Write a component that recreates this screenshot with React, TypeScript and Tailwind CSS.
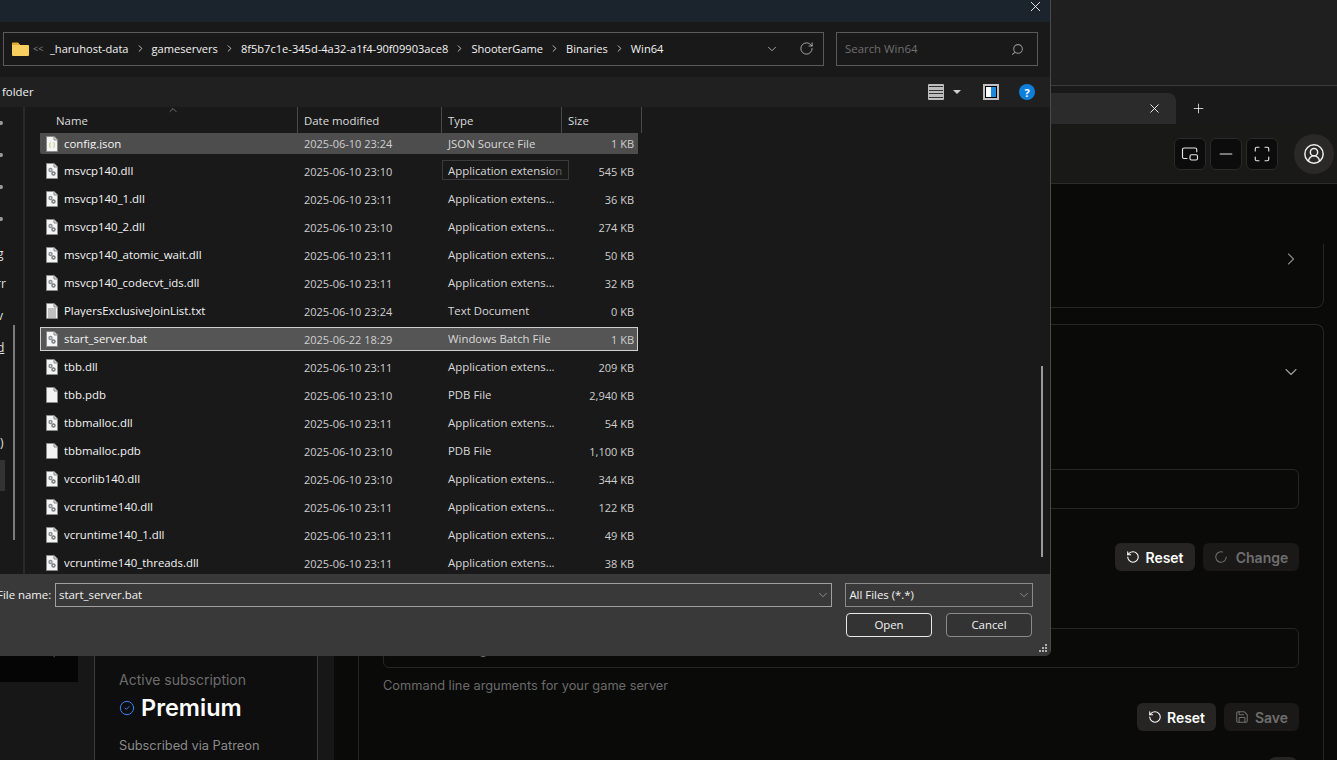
import {
  ChevronDown,
  ChevronRight,
  ChevronUp,
  CircleCheck,
  CircleUserRound,
  LoaderCircle,
  Maximize,
  Minus,
  PictureInPicture2,
  Plus,
  RotateCcw,
  RotateCw,
  Save,
  Search,
  X,
} from "lucide-react";

type Kind = "dll" | "json" | "txt" | "pdb";

const files: { name: string; date: string; type: string; size: string; kind: Kind }[] = [
  { name: "config.json", date: "2025-06-10 23:24", type: "JSON Source File", size: "1 KB", kind: "json" },
  { name: "msvcp140.dll", date: "2025-06-10 23:10", type: "Application extension", size: "545 KB", kind: "dll" },
  { name: "msvcp140_1.dll", date: "2025-06-10 23:11", type: "Application extens...", size: "36 KB", kind: "dll" },
  { name: "msvcp140_2.dll", date: "2025-06-10 23:10", type: "Application extens...", size: "274 KB", kind: "dll" },
  { name: "msvcp140_atomic_wait.dll", date: "2025-06-10 23:11", type: "Application extens...", size: "50 KB", kind: "dll" },
  { name: "msvcp140_codecvt_ids.dll", date: "2025-06-10 23:11", type: "Application extens...", size: "32 KB", kind: "dll" },
  { name: "PlayersExclusiveJoinList.txt", date: "2025-06-10 23:24", type: "Text Document", size: "0 KB", kind: "txt" },
  { name: "start_server.bat", date: "2025-06-22 18:29", type: "Windows Batch File", size: "1 KB", kind: "dll" },
  { name: "tbb.dll", date: "2025-06-10 23:11", type: "Application extens...", size: "209 KB", kind: "dll" },
  { name: "tbb.pdb", date: "2025-06-10 23:10", type: "PDB File", size: "2,940 KB", kind: "pdb" },
  { name: "tbbmalloc.dll", date: "2025-06-10 23:11", type: "Application extens...", size: "54 KB", kind: "dll" },
  { name: "tbbmalloc.pdb", date: "2025-06-10 23:10", type: "PDB File", size: "1,100 KB", kind: "pdb" },
  { name: "vccorlib140.dll", date: "2025-06-10 23:10", type: "Application extens...", size: "344 KB", kind: "dll" },
  { name: "vcruntime140.dll", date: "2025-06-10 23:11", type: "Application extens...", size: "122 KB", kind: "dll" },
  { name: "vcruntime140_1.dll", date: "2025-06-10 23:11", type: "Application extens...", size: "49 KB", kind: "dll" },
  { name: "vcruntime140_threads.dll", date: "2025-06-10 23:11", type: "Application extens...", size: "38 KB", kind: "dll" },
];

const crumbs = ["_haruhost-data", "gameservers", "8f5b7c1e-345d-4a32-a1f4-90f09903ace8", "ShooterGame", "Binaries", "Win64"];

const FileIcon = ({ kind }: { kind: Kind }) => (
  <svg width="12" height="16" viewBox="0 0 12 16" className="shrink-0">
    <path d="M.5.5h7.5l3.5 3.5v11.5H.5z" fill="#f4f4f4" stroke="#8b8b8b" />
    <path d="M8 .5V4h3.5" fill="#d8d8d8" stroke="#8b8b8b" />
    {kind === "dll" && (
      <g fill="#8a8f96">
        <circle cx="4.5" cy="7" r="2.2" />
        <circle cx="7.5" cy="10.5" r="2.2" fill="#767b82" />
        <circle cx="4.5" cy="7" r=".8" fill="#f4f4f4" />
        <circle cx="7.5" cy="10.5" r=".8" fill="#f4f4f4" />
      </g>
    )}
    {kind === "json" && (
      <path d="M4.5 6.5c-1 0-.5 2-1 2.5.5.5 0 2.5 1 2.5M7.5 6.5c1 0 .5 2 1 2.5-.5.5 0 2.5-1 2.5" fill="none" stroke="#a8b84a" strokeWidth=".8" />
    )}
    {kind === "txt" && <path d="M2 6h8M2 8h8M2 10h8M2 12h8M2 14h8" stroke="#8b8b8b" />}
  </svg>
);

const Footer = () => (
  <div className="relative flex h-[82px] flex-col bg-[#393939] pr-[17px]">
    <div className="mt-[9px] flex h-[24px] items-center">
      <span className="ml-[-3px] w-[58px] shrink-0 whitespace-nowrap">File name:</span>
      <div className="flex h-[24px] w-[779px] items-center border border-[#a0a0a0] pl-[3px]">
        <span className="flex-1">start_server.bat</span>
        <ChevronDown size={14} strokeWidth={1} className="mr-[1px] text-[#c4c4c4]" />
      </div>
      <div className="ml-[13px] flex h-[24px] w-[188px] items-center border border-[#8a8a8a] pl-[3px]">
        <span className="flex-1">All Files (*.*)</span>
        <ChevronDown size={14} strokeWidth={1} className="mr-[1px] text-[#c4c4c4]" />
      </div>
    </div>
    <div className="mt-[6px] flex justify-end gap-[14px] pr-[1px]">
      <button className="h-[24px] w-[86px] rounded-[4px] border border-[#e8e8e8] bg-[#333]">Open</button>
      <button className="h-[24px] w-[86px] rounded-[4px] border border-[#8a8a8a] bg-[#333]">Cancel</button>
    </div>
    <svg width="8" height="8" viewBox="0 0 8 8" className="absolute bottom-[4px] right-[3px] fill-[#b0b0b0]">
      <path d="M6 0h2v2H6zM3 3h2v2H3zM6 3h2v2H6zM0 6h2v2H0zM3 6h2v2H3zM6 6h2v2H6z" />
    </svg>
  </div>
);

const FileDialog = () => (
  <div className="absolute left-0 top-0 flex h-[656px] w-[1051px] flex-col overflow-hidden rounded-br-[6px] border-r border-[#4a4a4a] bg-[#191919] font-['Open_Sans',sans-serif] text-[11.4px] leading-none text-[#f2f2f2]">
    <div className="relative h-[22px] bg-[#1b232d]">
      <X size={17} strokeWidth={1.2} className="absolute right-[6px] top-[-2px] text-white" />
    </div>

    <div className="flex h-[55px] items-center gap-[12px] pb-[1px] pl-[3px] pr-[12px]">
      <div className="flex h-[34px] w-[821px] items-center border border-[#5a5a5a] pb-[1px] pl-[8px] text-[11.1px]">
        <svg width="17" height="14" viewBox="0 0 17 14" className="shrink-0">
          <path d="M0 2a1 1 0 0 1 1-1h5l2 2h8a1 1 0 0 1 1 1v9a1 1 0 0 1-1 1H1a1 1 0 0 1-1-1z" fill="#f8cf5f" />
          <path d="M0 1.5a1 1 0 0 1 1-1h5l2 2.5H0z" fill="#e6ab2e" />
        </svg>
        <span className="ml-[4px] mr-[7px] w-[10px] text-[9px] text-[#8a8a8a]">&lt;&lt;</span>
        {crumbs.map((c, i) => (
          <span key={c} className="flex items-center">
            <span>{c}</span>
            {i < crumbs.length - 1 && <ChevronRight size={11} strokeWidth={2} className="mx-[6px] text-[#cfcfcf]" />}
          </span>
        ))}
        <ChevronDown size={14} strokeWidth={1.3} className="ml-auto mr-[20px] text-[#d0d0d0]" />
        <RotateCw size={15} strokeWidth={1.2} className="mr-[9px] text-[#d0d0d0]" />
      </div>
      <div className="flex h-[34px] flex-1 items-center justify-between border border-[#5a5a5a] pl-[8px] pr-[13px] text-[#6f6f6f]">
        <span>Search Win64</span>
        <Search size={13} strokeWidth={2} className="-scale-x-100 text-[#8f8f8f]" />
      </div>
    </div>

    <div className="flex h-[30px] items-center justify-between bg-[#202020] pl-[2px] pr-[15px]">
      <span>folder</span>
      <div className="flex items-center">
        <div className="flex h-[16px] w-[16px] flex-col justify-evenly rounded-[1px] bg-[#bdbdbd] px-[1px]">
          <div className="h-px bg-[#333]" />
          <div className="h-px bg-[#333]" />
          <div className="h-px bg-[#333]" />
          <div className="h-px bg-[#333]" />
        </div>
        <div className="ml-[9px] h-0 w-0 border-x-[4px] border-t-[4px] border-x-transparent border-t-[#d0d0d0]" />
        <div className="ml-[22px] flex h-[16px] w-[16px] border-2 border-[#c0c0c0] bg-black p-[1px]">
          <div className="w-1/2 bg-white" />
          <div className="w-1/2 bg-[#1d8ae0]" />
        </div>
        <div className="ml-[20px] flex h-[16px] w-[16px] items-center justify-center rounded-full bg-[#0f7fdc] text-[11px] font-bold text-white">?</div>
      </div>
    </div>

    <div className="flex min-h-0 flex-1">
      <div className="relative flex w-[25px] shrink-0 justify-start border-r-2 border-[#2a2a2a] text-[#e0e0e0]">
        <div className="flex w-[13px] flex-col gap-[28px] pl-0 pt-[14px]">
          <div className="h-[4px] w-[3px] rounded-r-full bg-[#9a9a9a]" />
          <div className="h-[4px] w-[3px] rounded-r-full bg-[#9a9a9a]" />
          <div className="h-[4px] w-[3px] rounded-r-full bg-[#9a9a9a]" />
          <div className="h-[4px] w-[3px] rounded-r-full bg-[#9a9a9a]" />
        </div>
        <div className="absolute left-[-3px] top-[141px] text-[12px]">g</div>
        <div className="absolute left-[-4px] top-[171px] text-[12px]">rr</div>
        <div className="absolute left-[-3px] top-[203px] text-[12px]">v</div>
        <div className="absolute left-[-3px] top-[235px] text-[12px] underline">d</div>
        <div className="absolute left-0 top-[330px] text-[12px]">)</div>
        <div className="absolute left-0 top-[353px] h-[31px] w-[5px] bg-[#333]" />
        <div className="absolute left-[13px] top-[218px] h-[215px] w-[2px] bg-[#7a7a7a]" />
      </div>

      <div className="relative flex min-w-0 flex-1 flex-col">
        <div className="relative flex h-[26px] shrink-0 items-center text-[#dcdcdc]">
          <ChevronUp size={12} strokeWidth={1.2} className="absolute left-[142px] top-[-3px] text-[#b0b0b0]" />
          <span className="h-full w-[272px] pl-[31px] leading-[27px]">Name</span>
          <span className="h-full w-[144px] border-l border-[#4a4a4a] pl-[6px] leading-[27px]">Date modified</span>
          <span className="h-full w-[120px] border-l border-[#4a4a4a] pl-[6px] leading-[27px]">Type</span>
          <span className="h-full w-[81px] border-x border-[#4a4a4a] pl-[6px] leading-[27px]">Size</span>
        </div>
        <div className="flex h-[441px] flex-col gap-[4px] overflow-hidden">
          {files.map((f, i) => (
            <div
              key={f.name}
              className={
                "relative flex shrink-0 items-center " +
                (i === 0
                  ? "ml-[15px] mb-[1px] h-[21px] w-[598px] rounded-bl-[2px] bg-[#4d4d4d]"
                  : f.name === "start_server.bat"
                    ? "ml-[15px] h-[24px] w-[598px] bg-[#555] shadow-[inset_0_0_0_1px_#d0d0d0]"
                    : "ml-[15px] h-[24px] w-[598px]")
              }
            >
              <span className="ml-[6px] flex w-[18px] shrink-0 items-center">
                <FileIcon kind={f.kind} />
              </span>
              <span className="w-[240px] shrink-0 truncate text-[#f4f4f4]">{f.name}</span>
              <span className="w-[144px] shrink-0 text-[11px] text-[#cfcfcf]">{f.date}</span>
              <span className="w-[120px] shrink-0 whitespace-nowrap text-[#d8d8d8]">{f.type}</span>
              <span className="w-[66px] shrink-0 text-right text-[11px] text-[#cfcfcf]">{f.size}</span>
              {i === 1 && (
                <div className="absolute left-[402px] top-[1px] h-[20px] w-[127px] border border-[#3a3a3a]">
                  <div className="absolute right-[4px] top-0 h-full w-[16px] bg-gradient-to-r from-transparent to-[#191919]/80" />
                </div>
              )}
            </div>
          ))}
        </div>
        <div className="absolute right-[7px] top-[259px] h-[191px] w-[2px] bg-[#9a9a9a]" />
      </div>
    </div>

    <Footer />
  </div>
);

const Background = () => (
  <div className="flex h-[760px] flex-col overflow-hidden bg-[#0a0a09] font-['Inter',sans-serif] text-white">
    <div className="h-[86px] shrink-0 border-b border-[#3c3c3c] bg-[#1f1f1f]" />
    <div className="flex h-[38px] shrink-0 items-end bg-[#191919]">
      <div className="ml-auto flex h-[31px] w-[176px] items-center justify-end rounded-t-[8px] bg-[#2b2b2b] pr-[14px]">
        <X size={15} strokeWidth={1.4} className="text-white" />
      </div>
      <div className="mr-[117px] flex h-[31px] w-[44px] items-center justify-center">
        <Plus size={15} strokeWidth={1.2} className="text-white" />
      </div>
    </div>
    <div className="flex h-[60px] shrink-0 items-center justify-end border-b border-[#2c2c2c] bg-[#191918] pr-[3px]">
      <div className="flex gap-[4px]">
        <div className="flex h-[32px] w-[32px] items-center justify-center rounded-[6px] border border-[#2a2a2a] bg-[#0c0c0c]">
          <PictureInPicture2 size={18} strokeWidth={1.5} className="text-[#e6e6e6]" />
        </div>
        <div className="flex h-[32px] w-[32px] items-center justify-center rounded-[6px] border border-[#2a2a2a] bg-[#0c0c0c]">
          <Minus size={20} strokeWidth={1.4} className="text-[#e6e6e6]" />
        </div>
        <div className="flex h-[32px] w-[32px] items-center justify-center rounded-[6px] border border-[#2a2a2a] bg-[#0c0c0c]">
          <Maximize size={18} strokeWidth={1.5} className="text-[#e6e6e6]" />
        </div>
      </div>
      <div className="ml-[16px] flex h-[40px] w-[40px] items-center justify-center rounded-full bg-[#2b2927]">
        <CircleUserRound size={22} strokeWidth={1.6} className="text-[#eeeeee]" />
      </div>
    </div>

    <div className="flex min-h-0 flex-1">
      <aside className="flex w-[334px] shrink-0 flex-col bg-[#171717]">
        <div className="mt-[410px] flex h-[88px] w-[78px] shrink-0 items-start overflow-hidden bg-[#050505] pt-[50px] text-[11px] leading-[14px] text-[#6b5f58]">
          <span className="ml-[2px] whitespace-nowrap">Game Help</span>
        </div>
        <div className="ml-[94px] mt-[-34px] w-[224px] flex-1 border-x border-[#3c3c3c] bg-[#0e0e0e] px-[24px] pt-[22px]">
          <p className="text-[14px] leading-[20px] text-[#6d6d6d]">Active subscription</p>
          <div className="mt-[2px] flex items-center gap-[6px]">
            <CircleCheck size={16} strokeWidth={1.5} className="text-[#3b82f6]" />
            <span className="text-[23.5px] font-semibold leading-[32px] text-white">Premium</span>
          </div>
          <p className="mt-[12px] text-[12.8px] leading-[20px] text-[#8a8a8a]">Subscribed via Patreon</p>
        </div>
      </aside>

      <main className="flex min-w-0 flex-1 flex-col pl-[24px] pr-[13px]">
        <div className="mt-[60px] flex h-[64px] shrink-0 items-start justify-end rounded-br-[8px] border-b border-r border-[#262626] pr-[22px] pt-[5px]">
          <ChevronRight size={20} strokeWidth={1.3} className="text-[#8a8a8a]" />
        </div>
        <div className="mt-[16px] flex-1 rounded-t-[8px] border-x border-t border-[#262626] px-[24px] pt-[37px]">
          <div className="mr-[-2px] flex justify-end">
            <ChevronDown size={20} strokeWidth={1.3} className="text-[#a0a0a0]" />
          </div>
          <div className="mt-[87px] h-[40px] rounded-[6px] border border-[#262626]" />
          <div className="mt-[34px] flex justify-end gap-[8px]">
            <button className="flex h-[28px] w-[80px] items-center justify-center gap-[5px] rounded-[6px] bg-[#262524] text-[14px] font-semibold text-white">
              <RotateCcw size={14} strokeWidth={1.8} />
              Reset
            </button>
            <button className="flex h-[28px] w-[96px] items-center justify-center gap-[8px] rounded-[6px] bg-[#1a1918] text-[14px] font-semibold text-[#6f6f6f]">
              <LoaderCircle size={14} strokeWidth={1.8} />
              Change
            </button>
          </div>
          <div className="mt-[57px] flex h-[40px] items-center rounded-[6px] border border-[#262626] pl-[12px] text-[14px] text-[#6b6b6b]">
            Additional arguments
          </div>
          <p className="mt-[9px] text-[12.8px] leading-[18px] text-[#6b6b6b]">Command line arguments for your game server</p>
          <div className="mt-[8px] flex justify-end gap-[8px]">
            <button className="flex h-[28px] w-[79px] items-center justify-center gap-[5px] rounded-[6px] bg-[#262524] text-[14px] font-semibold text-white">
              <RotateCcw size={14} strokeWidth={1.8} />
              Reset
            </button>
            <button className="flex h-[28px] w-[75px] items-center justify-center gap-[6px] rounded-[6px] bg-[#1a1918] text-[14px] font-semibold text-[#6f6f6f]">
              <Save size={14} strokeWidth={1.8} />
              Save
            </button>
          </div>
          <div className="ml-auto mt-[26px] h-[18px] w-[32px] rounded-full bg-[#262524]" />
        </div>
      </main>
    </div>
  </div>
);

export default function App() {
  return (
    <div className="relative h-[760px] overflow-hidden">
      <Background />
      <FileDialog />
    </div>
  );
}
